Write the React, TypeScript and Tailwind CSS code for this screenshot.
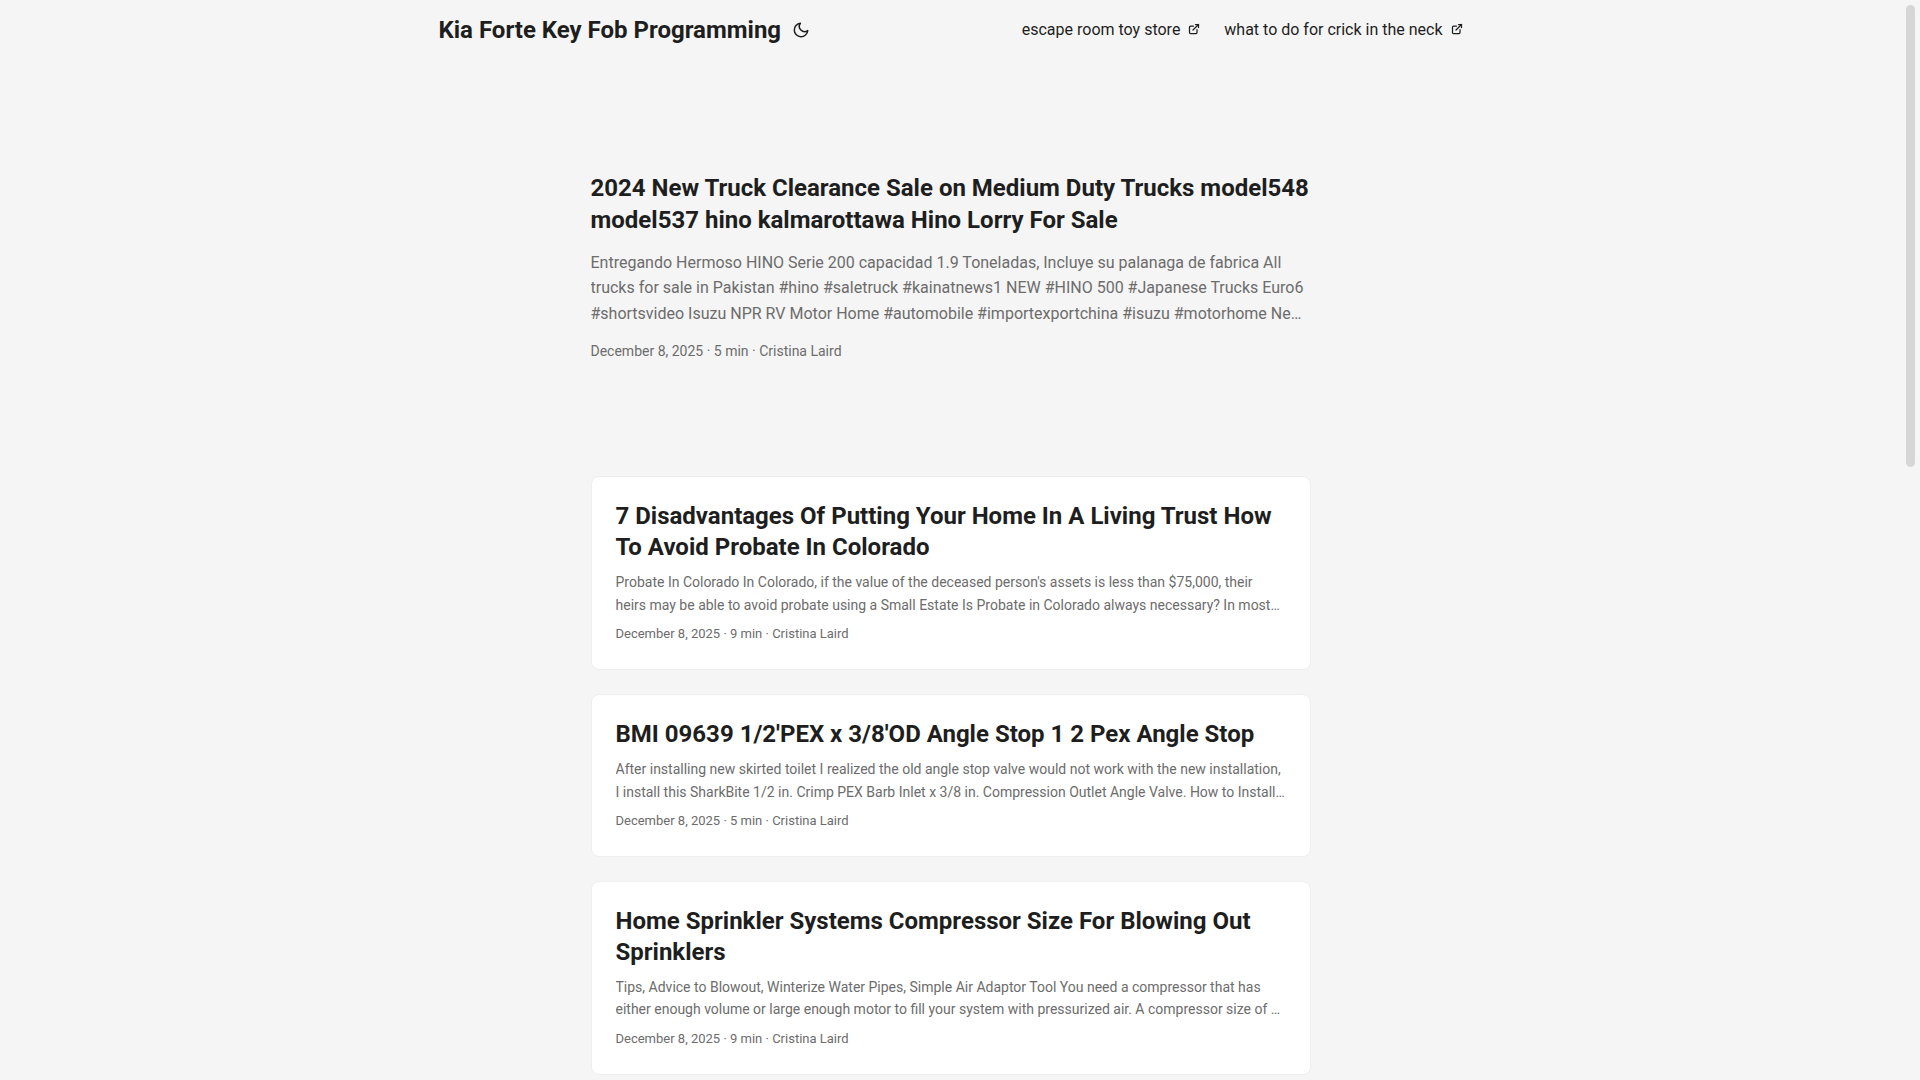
const posts = [
  {
    title: "7 Disadvantages Of Putting Your Home In A Living Trust How To Avoid Probate In Colorado",
    text: "Probate In Colorado In Colorado, if the value of the deceased person's assets is less than $75,000, their heirs may be able to avoid probate using a Small Estate Is Probate in Colorado always necessary? In most cases the answer depends on the value and the type of the assets involved in the estate.",
    min: "9 min",
  },
  {
    title: "BMI 09639 1/2'PEX x 3/8'OD Angle Stop 1 2 Pex Angle Stop",
    text: "After installing new skirted toilet I realized the old angle stop valve would not work with the new installation, I install this SharkBite 1/2 in. Crimp PEX Barb Inlet x 3/8 in. Compression Outlet Angle Valve. How to Install a PEX angle stop valve the easy way with only a few simple tools at home.",
    min: "5 min",
  },
  {
    title: "Home Sprinkler Systems Compressor Size For Blowing Out Sprinklers",
    text: "Tips, Advice to Blowout, Winterize Water Pipes, Simple Air Adaptor Tool You need a compressor that has either enough volume or large enough motor to fill your system with pressurized air. A compressor size of at least ten gallons is a good place to start for most residential sprinkler systems out there.",
    min: "9 min",
  },
];

function External() {
  return (
    <svg className="inline align-[0.5px]" fill="none" stroke="currentColor" strokeLinecap="round" strokeLinejoin="round" strokeWidth="2.5" viewBox="0 0 24 24" width="12" height="12">
      <path d="M18 13v6a2 2 0 01-2 2H5a2 2 0 01-2-2V8a2 2 0 012-2h6" />
      <path d="M15 3h6v6" />
      <path d="M10 14L21 3" />
    </svg>
  );
}

function MenuLink({ label }: { label: string }) {
  return (
    <li>
      <a className="block text-base text-[#1e1e1e]" href="#">
        <span>{label}</span>&nbsp;{" "}
        <External />
      </a>
    </li>
  );
}

export default function App() {
  return (
    <div className="flex h-screen overflow-hidden bg-[#f5f5f5] font-['Roboto','Liberation_Sans',sans-serif] text-[18px] leading-[1.6] text-[#1e1e1e]">
      <div className="min-w-0 flex-1">
        <header>
          <nav className="mx-auto flex max-w-[1072px] justify-between leading-[60px]">
            <div className="mx-6 my-auto flex flex-wrap">
              <a className="text-2xl leading-[60px] font-bold" href="#">Kia Forte Key Fob Programming</a>
              <div className="mr-2 ml-[11px] inline-flex items-center gap-3">
                <button className="h-[18px] leading-none" aria-label="Toggle theme">
                  <svg fill="none" stroke="currentColor" strokeLinecap="round" strokeLinejoin="round" strokeWidth="2" viewBox="0 0 24 24" width="18" height="18">
                    <path d="M21 12.79A9 9 0 1 1 11.21 3 7 7 0 0 0 21 12.79z" />
                  </svg>
                </button>
              </div>
            </div>
            <ul className="mx-6 my-auto flex gap-6 whitespace-nowrap">
              <MenuLink label="escape room toy store" />
              <MenuLink label="what to do for crick in the neck" />
            </ul>
          </nav>
        </header>
        <main className="mx-auto max-w-[768px] p-6">
          <article className="mt-6 mb-12 flex min-h-[320px] flex-col justify-center pb-[2px]">
            <h1 className="text-2xl leading-[1.3] font-bold">2024 New Truck Clearance Sale on Medium Duty Trucks model548 model537 hino kalmarottawa Hino Lorry For Sale</h1>
            <p className="my-3.5 line-clamp-3 text-base leading-[1.6] text-[#6c6c6c]">
              Entregando Hermoso HINO Serie 200 capacidad 1.9 Toneladas, Incluye su palanaga de fabrica All trucks for sale in Pakistan #hino #saletruck #kainatnews1 NEW #HINO 500 #Japanese Trucks Euro6 #shortsvideo Isuzu NPR RV Motor Home #automobile #importexportchina #isuzu #motorhome New Truck Clearance Sale on Medium Duty Trucks for every buyer in the market today.
            </p>
            <footer className="text-sm text-[#6c6c6c]">December 8, 2025&nbsp;·&nbsp;5 min&nbsp;·&nbsp;Cristina Laird</footer>
          </article>
          {posts.map((p) => (
            <article key={p.title} className="mb-6 rounded-lg border border-[#eeeeee] bg-white p-6">
              <h2 className="text-2xl leading-[1.3] font-bold">{p.title}</h2>
              <p className="my-2 line-clamp-2 text-sm leading-[1.6] text-[#6c6c6c]">{p.text}</p>
              <footer className="text-[13px] text-[#6c6c6c]">December 8, 2025&nbsp;·&nbsp;{p.min}&nbsp;·&nbsp;Cristina Laird</footer>
            </article>
          ))}
        </main>
      </div>
      <aside className="w-[19px] shrink-0 p-[5px]">
        <div className="h-[462px] rounded-[5px] bg-[#d6d6d6]" />
      </aside>
    </div>
  );
}
